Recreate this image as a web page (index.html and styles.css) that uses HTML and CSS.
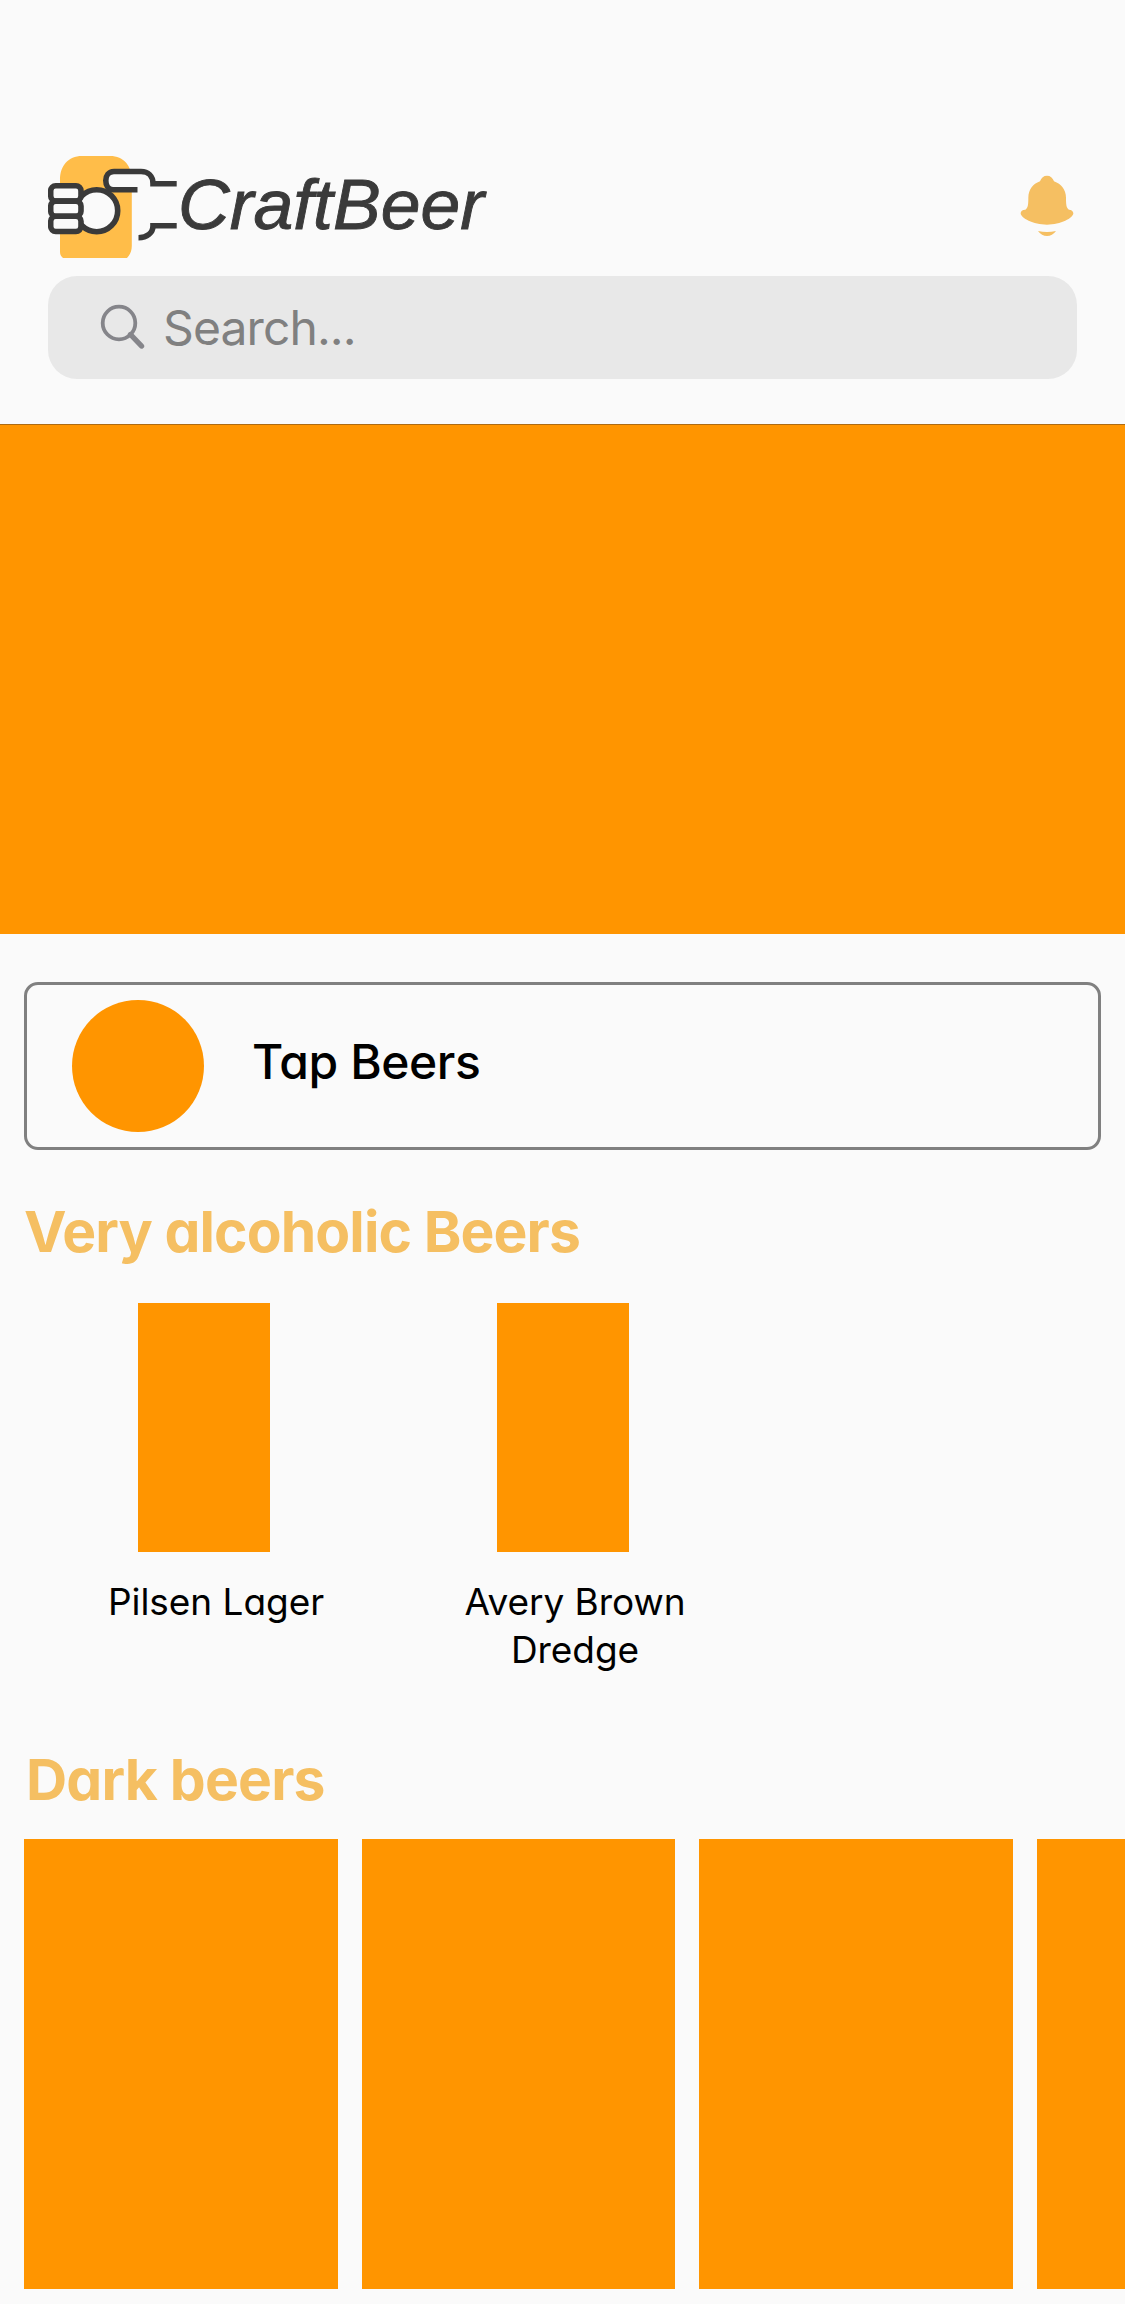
FILE: index.html
```html
<!DOCTYPE html>
<html lang="en">
<head>
<meta charset="utf-8">
<title>CraftBeer</title>
<link rel="stylesheet" href="styles.css">
</head>
<body>
<header class="header">
  <div class="brand-row">
    <svg class="logo" viewBox="0 0 450 102" role="img" aria-label="CraftBeer">
      <path d="M12 98V24C12 10 20 0 34 0H62C76 0 83.8 10 83.8 24V90C83.8 95 82 99 79 102H15Q12 100 12 96Z" fill="#ffbd49"/>
      <g class="hand">
        <circle cx="48.7" cy="54.7" r="21"/>
        <rect x="2.7" y="29.7" width="30.3" height="15.4" rx="5"/>
        <rect x="2.7" y="45.1" width="30.3" height="15.2" rx="5"/>
        <rect x="2.7" y="60.3" width="30.3" height="15.2" rx="5"/>
        <path d="M89.5 33.7H65C60 33.7 57.8 29 57.8 24.5S60.5 15.5 66 15.5H93C100 15.5 105 20 105 27.7H128.7"/>
        <path d="M128.7 69.7H105C105 77 99 81.7 90.5 81.7" fill="none"/>
      </g>
      <text class="logo-text" x="130" y="72.5" textLength="306" lengthAdjust="spacingAndGlyphs">CraftBeer</text>
    </svg>
    <svg class="bell" viewBox="60 45 162 186" role="img" aria-label="Notifications">
      <path d="M141 47C131 47 124 53 120 64C98 72 85 90 85 113C85 134 84 143 76 149C67 149 62 154 62 160C62 174 100 194 141 194S220 174 220 160C220 154 214 149 207 149C199 143 198 134 198 113C198 90 184 72 162 64C158 53 151 47 141 47Z"/>
      <path d="M114 213Q141 219 168 213Q157 228 141 228T114 213Z"/>
    </svg>
  </div>
  <div class="search">
    <svg class="search-icon" viewBox="0 0 46 46"><circle cx="19" cy="19" r="16.3"/><path d="M30.5 30.5L41.5 42"/></svg>
    <span class="search-text">Search...</span>
  </div>
</header>
<main>
  <section class="hero"></section>
  <section class="tap-card">
    <span class="tap-avatar"></span>
    <span class="tap-label">Tap Beers</span>
  </section>
  <h2 class="heading heading-strong">Very alcoholic Beers</h2>
  <section class="beers">
    <article class="beer"><div class="bottle"></div><p class="name">Pilsen Lager</p></article>
    <article class="beer"><div class="bottle"></div><p class="name">Avery Brown Dredge</p></article>
  </section>
  <h2 class="heading heading-dark">Dark beers</h2>
  <section class="dark-list">
    <div class="dark-card"></div>
    <div class="dark-card"></div>
    <div class="dark-card"></div>
    <div class="dark-card"></div>
  </section>
</main>
</body>
</html>
```
FILE: styles.css
```css
* { box-sizing: border-box; }
body {
  margin: 0;
  height: 2304px;
  overflow: hidden;
  background: #fafafa;
  color: #000;
  font-family: Inter, sans-serif;
  font-feature-settings: "cv11";
}
.header {
  height: 425px;
  padding: 156px 48px 0;
  border-bottom: 1px solid #ad6b13;
}
.brand-row {
  display: flex;
  justify-content: space-between;
  height: 120px;
}
.logo { display: block; width: 450px; height: 102px; overflow: hidden; }
.hand {
  fill: #fafafa;
  stroke: #3a3a3a;
  stroke-width: 5.6;
  filter: blur(0.7px);
}
.logo-text {
  font: italic 70px "Liberation Sans", Arial, sans-serif;
  fill: #3a3a3a;
  stroke: #3a3a3a;
  stroke-width: 0.9;
  filter: blur(0.7px);
}
.bell {
  width: 54px;
  height: 62px;
  margin: 19px 3px 0 0;
  fill: #f5bf62;
}
.search {
  display: flex;
  align-items: center;
  height: 103px;
  padding-left: 52px;
  border-radius: 29px;
  background: #e8e8e8;
}
.search-icon {
  width: 46px;
  height: 46px;
  margin: -2px 17px 0 0;
  fill: none;
  stroke: #85858a;
  stroke-width: 3.8;
}
.search-icon path { stroke-width: 5.4; stroke-linecap: round; }
.search-text {
  margin-top: 1px;
  color: #808080;
  font-size: 48px;
  line-height: 60px;
  font-feature-settings: normal;
  letter-spacing: -0.9px;
}
.hero { height: 509px; background: #ff9500; }
.tap-card {
  display: flex;
  align-items: center;
  height: 168px;
  margin: 48px 24px 0;
  padding-left: 45px;
  border: 3px solid #808080;
  border-radius: 14px;
}
.tap-avatar {
  width: 132px;
  height: 132px;
  margin-right: 48px;
  border-radius: 50%;
  background: #ff9500;
}
.tap-label {
  margin-top: -9px;
  font-size: 48px;
  line-height: 60px;
  font-weight: 500;
  letter-spacing: -0.4px;
}
.heading {
  margin: 0 24px;
  color: #f5bf62;
  font-size: 57px;
  line-height: 72px;
  font-weight: 700;
  white-space: nowrap;
}
.heading-strong { margin-top: 46px; letter-spacing: -0.9px; }
.heading-dark { margin-left: 26px; letter-spacing: -0.8px; }
.beers {
  display: flex;
  height: 476px;
  padding: 35px 0 0 24px;
}
.beer { width: 359px; }
.bottle {
  width: 132px;
  height: 249px;
  margin-left: 114px;
  background: #ff9500;
}
.name {
  width: 264px;
  margin: 26px 0 0 60px;
  font-size: 37px;
  line-height: 48px;
  text-align: center;
  letter-spacing: -0.05px;
}
.dark-list {
  display: flex;
  gap: 24px;
  height: 450px;
  margin: 23px 0 0 24px;
  overflow: hidden;
}
.dark-card {
  flex: 0 0 313.67px;
  height: 449.5px;
  background: #ff9500;
}
```
